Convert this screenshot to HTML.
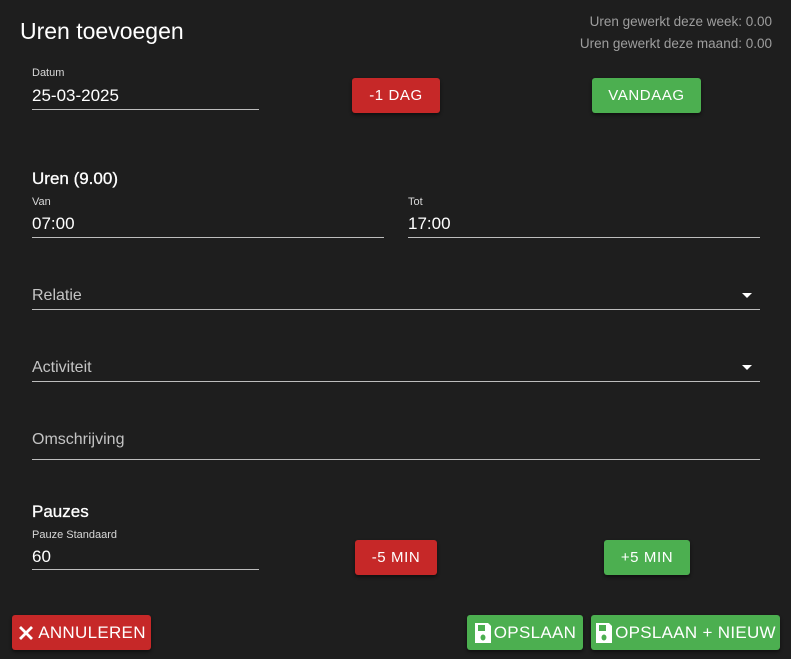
<!DOCTYPE html>
<html><head><meta charset="utf-8"><style>
body{margin:0;width:791px;height:659px;background:#1e1e1e;font-family:"Liberation Sans",Arial,sans-serif;color:#fff;position:relative;overflow:hidden}
.a{position:absolute}
.line{position:absolute;height:1px;background:#bdbdbd}
.lab{position:absolute;font-size:11px;color:#d8d8d8}
.val{position:absolute;font-size:17px;color:#fff}
.ph{position:absolute;font-size:16px;color:#c4c4c4}
.btn{position:absolute;border-radius:3px;color:#fff;font-size:15px;letter-spacing:0.6px;display:flex;align-items:center;justify-content:center;box-shadow:0 2px 3px rgba(0,0,0,.5)}
.r{background:#c62828}.g{background:#4caf50}
.h{position:absolute;font-size:17px;color:#fff;-webkit-text-stroke:0.3px #fff}
.tri{position:absolute;width:0;height:0;border-left:5px solid transparent;border-right:5px solid transparent;border-top:5px solid #fff}
.n{font-family:"Liberation Sans Narrow","Liberation Sans",sans-serif;font-size:17px;letter-spacing:0.3px}
</style></head><body>
<div class="a" style="left:20px;top:18px;font-size:23px">Uren toevoegen</div>
<div class="a" style="right:19px;top:11px;font-size:13.5px;color:#9e9e9e;text-align:right;line-height:22px">Uren gewerkt deze week: 0.00<br>Uren gewerkt deze maand: 0.00</div>

<div class="lab" style="left:32px;top:67px">Datum</div>
<div class="val" style="left:32px;top:86px">25-03-2025</div>
<div class="line" style="left:32px;top:109px;width:227px"></div>
<div class="btn r" style="left:352px;top:78px;width:88px;height:35px">-1 DAG</div>
<div class="btn g" style="left:592px;top:78px;width:109px;height:35px">VANDAAG</div>

<div class="h" style="left:32px;top:169px">Uren (9.00)</div>
<div class="lab" style="left:32px;top:196px">Van</div>
<div class="val" style="left:32px;top:214px">07:00</div>
<div class="line" style="left:32px;top:237px;width:352px"></div>
<div class="lab" style="left:408px;top:196px">Tot</div>
<div class="val" style="left:408px;top:214px">17:00</div>
<div class="line" style="left:408px;top:237px;width:352px"></div>

<div class="ph" style="left:32px;top:287px">Relatie</div>
<div class="tri" style="left:742px;top:293px"></div>
<div class="line" style="left:32px;top:309px;width:728px"></div>
<div class="ph" style="left:32px;top:359px">Activiteit</div>
<div class="tri" style="left:742px;top:365px"></div>
<div class="line" style="left:32px;top:381px;width:728px"></div>
<div class="ph" style="left:32px;top:431px">Omschrijving</div>
<div class="line" style="left:32px;top:459px;width:728px"></div>

<div class="h" style="left:32px;top:502px">Pauzes</div>
<div class="lab" style="left:32px;top:529px">Pauze Standaard</div>
<div class="val" style="left:32px;top:547px">60</div>
<div class="line" style="left:32px;top:569px;width:227px"></div>
<div class="btn r" style="left:355px;top:540px;width:82px;height:35px">-5 MIN</div>
<div class="btn g" style="left:604px;top:540px;width:86px;height:35px">+5 MIN</div>

<div class="btn r n" style="left:12px;top:615px;width:139px;height:35px"><svg width="18" height="18" viewBox="0 0 18 18" style="margin-right:3px"><path d="M3 3L15 15M15 3L3 15" stroke="#fff" stroke-width="2.8"/></svg>ANNULEREN</div>
<div class="btn g n" style="left:467px;top:615px;width:116px;height:35px"><svg width="18" height="22" viewBox="0 0 18 22" style="margin-right:2px"><path d="M1 1h13l3 3v17H1z" fill="#fff"/><rect x="4" y="3" width="7" height="6" fill="#4caf50"/><ellipse cx="9" cy="15.5" rx="2.5" ry="3" fill="#4caf50"/></svg>OPSLAAN</div>
<div class="btn g n" style="left:591px;top:615px;width:189px;height:35px"><svg width="18" height="22" viewBox="0 0 18 22" style="margin-right:2px"><path d="M1 1h13l3 3v17H1z" fill="#fff"/><rect x="4" y="3" width="7" height="6" fill="#4caf50"/><ellipse cx="9" cy="15.5" rx="2.5" ry="3" fill="#4caf50"/></svg>OPSLAAN + NIEUW</div>
</body></html>
